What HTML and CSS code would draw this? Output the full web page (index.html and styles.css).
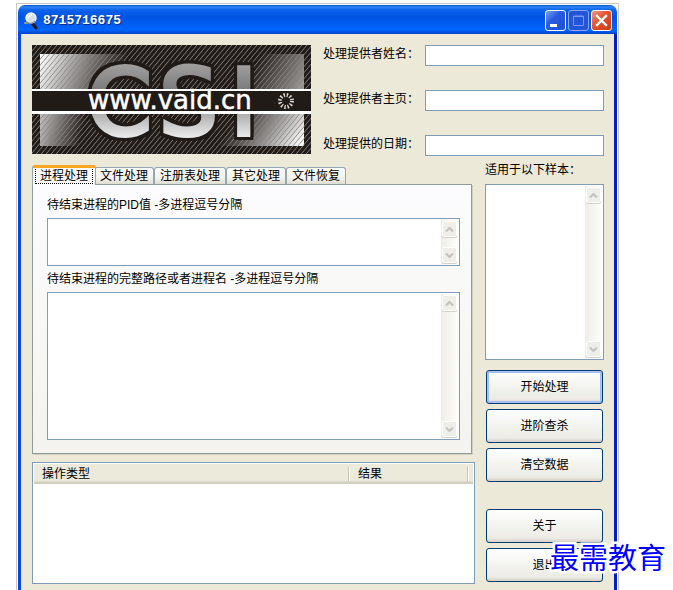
FILE: index.html
```html
<!DOCTYPE html>
<html lang="zh-CN">
  <head>
    <meta charset="utf-8">
    <title>8715716675</title>
    <meta name="viewport" content="width=device-width, initial-scale=1">
    <link rel="stylesheet" href="styles.css">
  </head>
  <body>
    <div class="frame">
      <div class="window">
        <header class="titlebar">
          <svg class="app-icon" width="16" height="18" viewBox="0 0 16 18">
            <path d="M9 11l4 5" stroke="#181818" stroke-width="3" stroke-linecap="round" />
            <path d="M1 11l4 0" stroke="#8a9099" stroke-width="2" />
            <circle cx="8" cy="6" r="5" fill="#d5e0ea" stroke="#eef3f8" stroke-width="1.5" />
            <path d="M5 6q1-3 4-3" stroke="#fff" stroke-width="1.5" fill="none" />
            <path d="M4 10q4 3 8-1" stroke="#7d8792" fill="none" />
          </svg>
          <h1 class="title">8715716675</h1>
          <button class="win-btn" aria-label="最小化">
            <svg width="19" height="19" viewBox="0 0 19 19"><path d="M4 13h7v3H4z" fill="#fff" /></svg>
          </button>
          <button class="win-btn dim" aria-label="最大化" disabled>
            <svg width="19" height="19" viewBox="0 0 19 19"><path d="M4.500 5h10v9.500h-10zM4 5.500h11" fill="none" stroke="#8099ec" /></svg>
          </button>
          <button class="win-btn close" aria-label="关闭">
            <svg width="19" height="19" viewBox="0 0 19 19"><path d="M5 5l9 9M14 5l-9 9" stroke="#fff" stroke-width="2.400" stroke-linecap="square" /></svg>
          </button>
        </header>

        <main class="client">
          <section class="top">
            <svg class="logo" width="279" height="109" viewBox="0 0 279 109">
              <defs>
                <pattern id="stripes" width="5" height="6" patternUnits="userSpaceOnUse">
                  <path d="M-1 7.200L6 -1.200M-1 1.200L1 -1.200M4 7.200L6 4.800" stroke="#8a8683" stroke-width="0.900" />
                </pattern>
                <linearGradient id="shineLeft" gradientUnits="userSpaceOnUse" x1="8" y1="14" x2="84" y2="42">
                  <stop offset="0" stop-color="#fff" />
                  <stop offset="1" stop-color="#fff" stop-opacity="0" />
                </linearGradient>
                <linearGradient id="shineLow" gradientUnits="userSpaceOnUse" x1="8" y1="80" x2="50" y2="90">
                  <stop offset="0" stop-color="#fff" stop-opacity="0.700" />
                  <stop offset="1" stop-color="#fff" stop-opacity="0" />
                </linearGradient>
                <linearGradient id="shineRight" gradientUnits="userSpaceOnUse" x1="270" y1="98" x2="210" y2="62">
                  <stop offset="0" stop-color="#fff" />
                  <stop offset="1" stop-color="#fff" stop-opacity="0" />
                </linearGradient>
                <linearGradient id="shineTop" gradientUnits="userSpaceOnUse" x1="271" y1="40" x2="225" y2="16">
                  <stop offset="0" stop-color="#fff" stop-opacity="0.550" />
                  <stop offset="1" stop-color="#fff" stop-opacity="0" />
                </linearGradient>
                <linearGradient id="steel" gradientUnits="userSpaceOnUse" x1="0" y1="20" x2="0" y2="91">
                  <stop offset="0" stop-color="#a09e9d" />
                  <stop offset="0.400" stop-color="#777" />
                  <stop offset="1" stop-color="#e8e8e8" />
                </linearGradient>
              </defs>
              <rect width="279" height="109" fill="#211b18" />
              <rect x="8" y="9" width="100" height="35" fill="url(#shineLeft)" />
              <rect x="8" y="68" width="60" height="33" fill="url(#shineLow)" />
              <rect x="180" y="68" width="92" height="33" fill="url(#shineRight)" />
              <rect x="200" y="9" width="72" height="35" fill="url(#shineTop)" />
              <rect width="279" height="109" fill="url(#stripes)" />
              <g class="logo-mark">
                <text x="55" y="90">C</text>
                <text x="127" y="90">S</text>
                <text x="198" y="90">I</text>
              </g>
              <rect y="44" width="279" height="25" fill="#fff" />
              <rect y="46" width="279" height="20" fill="#211b18" />
              <text class="logo-url" x="56" y="64">www.vaid.cn</text>
              <circle cx="254" cy="56" r="6" fill="none" stroke="#d8d5d3" stroke-width="4" stroke-dasharray="1.400 1.740" />
            </svg>
            <form class="provider">
              <label for="name">处理提供者姓名：</label>
              <input id="name" type="text">
              <label for="homepage">处理提供者主页：</label>
              <input id="homepage" type="text">
              <label for="date">处理提供的日期：</label>
              <input id="date" type="text">
            </form>
          </section>

          <div class="columns">
            <div class="left">
              <div class="tabs" role="tablist">
                <button class="tab active" role="tab" aria-selected="true"><span>进程处理</span></button>
                <button class="tab" role="tab">文件处理</button>
                <button class="tab" role="tab">注册表处理</button>
                <button class="tab" role="tab">其它处理</button>
                <button class="tab" role="tab">文件恢复</button>
              </div>
              <section class="panel" role="tabpanel">
                <label for="pid">待结束进程的PID值 -多进程逗号分隔</label>
                <div class="memo memo-small">
                  <textarea id="pid"></textarea>
                  <div class="scroll">
                    <button class="arrow" aria-label="向上" disabled><svg width="13" height="13" viewBox="0 0 13 13"><use href="#up" /></svg></button>
                    <button class="arrow" aria-label="向下" disabled><svg width="13" height="13" viewBox="0 0 13 13"><use href="#down" /></svg></button>
                  </div>
                </div>
                <label for="path">待结束进程的完整路径或者进程名 -多进程逗号分隔</label>
                <div class="memo memo-large">
                  <textarea id="path"></textarea>
                  <div class="scroll">
                    <button class="arrow" aria-label="向上" disabled><svg width="13" height="13" viewBox="0 0 13 13"><use href="#up" /></svg></button>
                    <button class="arrow" aria-label="向下" disabled><svg width="13" height="13" viewBox="0 0 13 13"><use href="#down" /></svg></button>
                  </div>
                </div>
              </section>
              <div class="results">
                <table>
                  <thead>
                    <tr>
                      <th>操作类型</th>
                      <th class="col-result">结果</th>
                      <th class="col-end"></th>
                    </tr>
                  </thead>
                  <tbody></tbody>
                </table>
              </div>
            </div>

            <div class="right">
              <label class="samples-label" for="samples">适用于以下样本：</label>
              <div class="memo memo-samples">
                <textarea id="samples"></textarea>
                <div class="scroll">
                  <button class="arrow" aria-label="向上" disabled><svg width="13" height="13" viewBox="0 0 13 13"><use href="#up" /></svg></button>
                  <button class="arrow" aria-label="向下" disabled><svg width="13" height="13" viewBox="0 0 13 13"><use href="#down" /></svg></button>
                </div>
              </div>
              <div class="actions">
                <button class="btn default">开始处理</button>
                <button class="btn">进阶查杀</button>
                <button class="btn">清空数据</button>
              </div>
              <div class="actions">
                <button class="btn">关于</button>
                <button class="btn">退出</button>
              </div>
            </div>
          </div>
        </main>
      </div>
    </div>
    <div class="watermark">最需教育</div>

    <svg width="0" height="0" display="none">
      <path id="up" d="M3 8.500l3.500-3.500 3.500 3.500" fill="none" stroke="#c6c5bd" stroke-width="2.200" />
      <path id="down" d="M3 4.500l3.500 3.500 3.500-3.500" fill="none" stroke="#c6c5bd" stroke-width="2.200" />
    </svg>
  </body>
</html>
```
FILE: styles.css
```css
* {
  box-sizing: border-box;
}
body {
  margin: 3px 54px 0 16px;
  background: #fff;
  color: #000;
  font: 12px/16px "Liberation Sans", "Noto Sans CJK SC", sans-serif;
}
button, input, textarea {
  font: inherit;
  color: inherit;
}
.frame {
  display: flex;
  min-height: calc(100vh - 3px);
  padding: 1px 1px 0;
  border: 1px solid #c8c8c8;
  border-bottom: 0;
}
.window {
  display: flex;
  flex-direction: column;
  flex: 1;
  min-width: 0;
  border-radius: 7px 7px 0 0;
  overflow: hidden;
}

/* title bar */
.titlebar {
  display: flex;
  align-items: center;
  gap: 2px;
  height: 29px;
  padding: 2px 5px 0 5px;
  background: linear-gradient(#0a4fc4 0, #2f86f6 2px, #0a62ea 5px, #0054e3 12px, #0060f8 22px, #0066ff 25px, #0040c8 29px);
}
.title {
  flex: 1;
  margin: 0;
  padding-left: 2px;
  color: #fff;
  font: bold 13px/16px "Liberation Mono", monospace;
  text-shadow: 1px 1px #0a2d80;
}
.win-btn {
  width: 21px;
  height: 21px;
  padding: 0;
  border: 1px solid #fff;
  border-radius: 3px;
  background: linear-gradient(135deg, #7a9ff5, #2a5be0 40%, #1c4fd6);
}
.win-btn svg, .arrow svg {
  display: block;
}
.win-btn.dim {
  border-color: #8ba8ee;
  background: #2355d8;
}
.win-btn.close {
  background: linear-gradient(135deg, #f09a80, #e2512c 45%, #cc3a10);
}

.client {
  flex: 1;
  padding: 11px 10px 6px 11px;
  border: solid #0a46e4;
  border-width: 0 3px;
  border-right-color: #0020c0;
  background: #ece9d8;
}
.top {
  display: flex;
  gap: 12px;
}
.logo {
  flex: none;
}
.logo-mark {
  font: 93px "DejaVu Sans", sans-serif;
  fill: url(#steel);
  stroke: url(#steel);
  stroke-width: 4px;
  filter: drop-shadow(3px 0 #211b18) drop-shadow(-3px 0 #211b18) drop-shadow(0 3px #211b18) drop-shadow(0 -3px #211b18);
}
.logo-url {
  font: 26px "DejaVu Sans", sans-serif;
  fill: #fff;
  stroke: #fff;
  stroke-width: 0.5px;
}
.provider {
  display: grid;
  flex: 1;
  grid-template-columns: auto 1fr;
  gap: 24px 6px;
}
.provider label {
  padding-top: 1px;
  white-space: nowrap;
}
.provider input {
  width: 100%;
  min-width: 0;
  height: 21px;
  padding: 0 3px;
  border: 1px solid #7f9db9;
  background: #fff;
}

.columns {
  display: flex;
  gap: 10px;
  margin-top: 4px;
}
.left {
  flex: 1;
  min-width: 0;
}
.right {
  width: 119px;
}

/* tabs */
.tabs {
  display: flex;
  align-items: flex-end;
  height: 24px;
}
.tab {
  height: 17px;
  padding: 0 5px;
  border: 1px solid #91a7b4;
  border-bottom: 0;
  border-radius: 3px 3px 0 0;
  background: linear-gradient(#fff, #f0f0ea 70%, #dcdccf);
  white-space: nowrap;
}
.tab.active {
  z-index: 1;
  height: 20px;
  margin: 0 -2px -1px 0;
  padding: 0 2px;
  border-top: 3px solid #f9a623;
  background: #fcfcfe;
}
.tab.active span {
  display: block;
  padding: 0 4px;
  border: 1px dotted #000;
  border-top: 0;
  line-height: 14px;
}
.panel {
  margin-right: 3px;
  padding: 7px 11px 13px 14px;
  border: 1px solid #919b9c;
  background: linear-gradient(#fcfcfe, #f4f3ee);
  box-shadow: 1px 1px #d2cfc0;
}
.panel label {
  display: block;
  line-height: 26px;
}

/* text areas with their scroll bars */
.memo {
  display: flex;
  padding: 1px;
  border: 1px solid #7f9db9;
  background: #fff;
}
.memo textarea {
  flex: 1;
  min-width: 0;
  padding: 2px;
  border: 0;
  outline: 0;
  resize: none;
  overflow: hidden;
  background: #fff;
}
.memo-small {
  height: 48px;
}
.memo-large {
  height: 148px;
}
.memo-samples {
  height: 176px;
}
.scroll {
  display: flex;
  flex-direction: column;
  justify-content: space-between;
  width: 17px;
  padding: 1px;
  background: linear-gradient(90deg, #eeede5, #fefefb);
}
.arrow {
  width: 15px;
  height: 16px;
  padding: 0;
  border: 1px solid #fff;
  border-radius: 2px;
  background: #efeee8;
  box-shadow: 0 1px #d3d1c3;
}

/* results list */
.results {
  height: 122px;
  margin-top: 8px;
  padding: 1px;
  border: 1px solid #7f9db9;
  background: #fff;
}
.results table {
  width: 100%;
  border-collapse: collapse;
  table-layout: fixed;
}
.results th {
  height: 20px;
  padding: 0 8px;
  background: linear-gradient(90deg, transparent calc(100% - 2px), #c7c5b2 0, #c7c5b2 calc(100% - 1px), #fff 0) 0 3px / 100% 14px no-repeat,
    linear-gradient(#ebeadb 17px, #e2decd 0, #cbc7b8);
  font-weight: normal;
  text-align: left;
}
.results .col-result {
  width: 119px;
}
.results .col-end {
  width: 4px;
  padding: 0;
  background: linear-gradient(#ebeadb 17px, #e2decd 0, #cbc7b8);
}

.samples-label {
  display: block;
  margin-bottom: 4px;
  line-height: 20px;
}
.actions {
  display: flex;
  flex-direction: column;
  gap: 5px;
  margin: 10px 1px 0;
}
.actions + .actions {
  margin-top: 27px;
}
.btn {
  height: 34px;
  border: 1px solid #003c74;
  border-radius: 3px;
  background: linear-gradient(#fff, #f3f3ef 50%, #ecebe5 88%, #d6d0c5);
}
.btn.default {
  box-shadow: inset 0 0 0 2px #a4bff0, inset 0 -2px #6982ee;
}

.watermark {
  position: absolute;
  right: 7px;
  bottom: 17px;
  color: #00f;
  font: 29px/34px "Noto Sans CJK SC", sans-serif;
  -webkit-text-stroke: 5px #fff;
  paint-order: stroke fill;
}
```
